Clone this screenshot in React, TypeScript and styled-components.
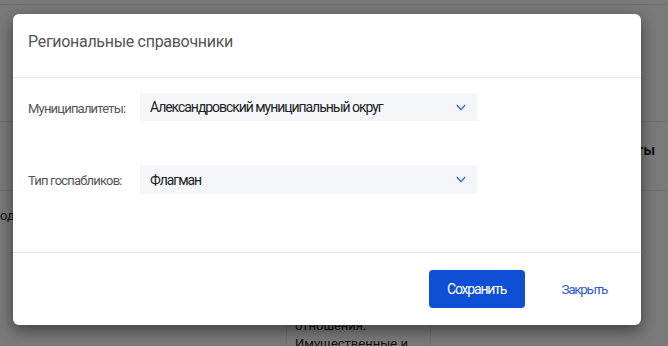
import React from "react";
import styled, { createGlobalStyle } from "styled-components";

const Global = createGlobalStyle`
  html, body { margin: 0; padding: 0; }
  body {
    width: 668px;
    height: 346px;
    overflow: hidden;
    background: #fff;
    font-family: Roboto, "Noto Sans", Arial, sans-serif;
  }
`;

const Page = styled.div`
  position: relative;
  width: 668px;
  height: 346px;
  overflow: hidden;
  background: #fff;
`;

const TopBar = styled.div`
  height: 4px;
  border-bottom: 1px solid #e4e4e4;
`;

const Table = styled.div`
  margin-top: 116px;
  display: grid;
  grid-template-columns: 286px 144px 238px;
`;

const HeadCell = styled.div`
  height: 70px;
  box-sizing: border-box;
  padding: 20px 13px 0 0;
  border-top: 1px solid #e4e4e4;
  border-bottom: 1px solid #e4e4e4;
  text-align: right;
  white-space: nowrap;
  font-size: 14px;
  line-height: 17px;
  font-weight: 700;
  color: #222;
`;

const Cell = styled.div<{ $line?: boolean; $top: number; $left: number }>`
  padding: ${(p) => p.$top}px 9px 0 ${(p) => p.$left}px;
  font-size: 13px;
  line-height: 18px;
  color: #222;
  white-space: nowrap;
  border-left: ${(p) => (p.$line ? "1px solid #e4e4e4" : "none")};
  display: flex;
  flex-direction: column;
`;

const Overlay = styled.div`
  position: absolute;
  inset: 0;
  background: rgba(0, 0, 0, 0.52);
`;

const Modal = styled.div`
  margin: 14px 0 0 13px;
  width: 628px;
  height: 311px;
  background: #fff;
  border-radius: 6px;
  box-shadow: 0 5px 15px rgba(0, 0, 0, 0.5);
  display: flex;
  flex-direction: column;
`;

const Header = styled.div`
  height: 64px;
  box-sizing: border-box;
  border-bottom: 1px solid #e9e9e9;
  padding: 18px 15px 0;
`;

const Title = styled.h4`
  margin: 0;
  font-size: 16px;
  line-height: 19px;
  font-weight: 400;
  letter-spacing: -0.3px;
  color: #555;
`;

const Body = styled.div`
  flex: 1;
  padding: 15px 15px 0;
  display: flex;
  flex-direction: column;
  gap: 44px;
  border-bottom: 1px solid #e9e9e9;
`;

const Row = styled.div`
  display: flex;
  align-items: center;
`;

const Label = styled.label`
  width: 112px;
  font-size: 13px;
  letter-spacing: -0.8px;
  color: #555;
  padding-top: 2px;
`;

const Select = styled.div<{ $h: number }>`
  width: 337px;
  height: ${(p) => p.$h}px;
  background: #f4f6fa;
  display: flex;
  align-items: center;
  justify-content: space-between;
  padding: 0 11px 0 10px;
  box-sizing: border-box;
  font-size: 14px;
  letter-spacing: -1.05px;
  color: #222;
`;

const Footer = styled.div`
  height: 72px;
  display: flex;
  align-items: center;
  padding: 0 34px 0 0;
  justify-content: flex-end;
  gap: 37px;
`;

const Primary = styled.button`
  width: 96px;
  height: 38px;
  border: none;
  border-radius: 4px;
  background: #0f4fd6;
  color: #fff;
  font-family: inherit;
  font-size: 14px;
  letter-spacing: -1.2px;
`;

const LinkButton = styled.button`
  border: none;
  background: none;
  padding: 0;
  color: #2e5bdc;
  font-family: inherit;
  font-size: 13.5px;
  letter-spacing: -1.3px;
`;

const Chevron = () => (
  <svg width="10" height="7" viewBox="0 0 10 7">
    <path d="M0.8 1 L5 5.6 L9.2 1" fill="none" stroke="#2e5bdc" strokeWidth="1.3" />
  </svg>
);

export default function App() {
  return (
    <Page>
      <Global />
      <TopBar />
      <Table>
        <HeadCell />
        <HeadCell />
        <HeadCell>Сроки работы</HeadCell>
        <Cell $top={16} $left={0}>
          <span>одовой отчёт</span>
        </Cell>
        <Cell $line $top={108} $left={8}>
          <span>Правовые</span>
          <span>отношения:</span>
          <span>Имущественные и</span>
        </Cell>
        <Cell $line $top={16} $left={9} />
      </Table>
      <Overlay>
        <Modal>
          <Header>
            <Title>Региональные справочники</Title>
          </Header>
          <Body>
            <Row>
              <Label>Муниципалитеты:</Label>
              <Select $h={28}>
                <span>Александровский муниципальный округ</span>
                <Chevron />
              </Select>
            </Row>
            <Row>
              <Label>Тип госпабликов:</Label>
              <Select $h={29}>
                <span>Флагман</span>
                <Chevron />
              </Select>
            </Row>
          </Body>
          <Footer>
            <Primary>Сохранить</Primary>
            <LinkButton>Закрыть</LinkButton>
          </Footer>
        </Modal>
      </Overlay>
    </Page>
  );
}
